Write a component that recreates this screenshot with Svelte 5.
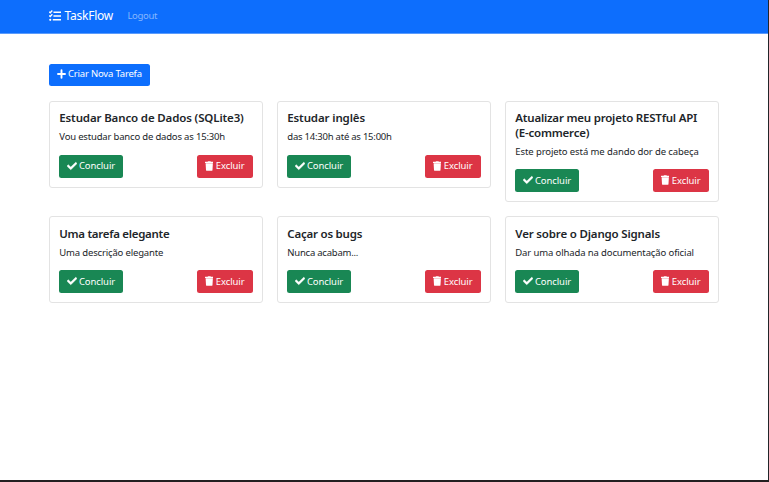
<script>
  const tasks = [
    { title: ['Estudar Banco de Dados (SQLite3)'], text: 'Vou estudar banco de dados as 15:30h', ts: -0.14, ds: -0.18 },
    { title: ['Estudar inglês'], text: 'das 14:30h até as 15:00h', ts: -0.13, ds: -0.23 },
    { title: ['Atualizar meu projeto RESTful API', '(E-commerce)'], text: 'Este projeto está me dando dor de cabeça', ts: -0.21, ds: -0.1 },
    { title: ['Uma tarefa elegante'], text: 'Uma descrição elegante', ts: -0.29, ds: -0.16 },
    { title: ['Caçar os bugs'], text: 'Nunca acabam...', ts: -0.22, ds: -0.23 },
    { title: ['Ver sobre o Django Signals'], text: 'Dar uma olhada na documentação oficial', ts: -0.17, ds: -0.12 }
  ];
</script>

<div class="page">
  <nav>
    <a class="brand" href="#home">
      <svg width="12" height="12" viewBox="0 0 512 512" fill="none" stroke="currentColor" stroke-width="66">
        <path d="M12 78l42 42 88-98M12 236l42 42 88-98" stroke-width="56" />
        <path d="M190 92h322M190 256h322M160 420h352" />
        <circle cx="54" cy="420" r="46" fill="currentColor" stroke="none" />
      </svg>
      <span>TaskFlow</span>
    </a>
    <a class="logout" href="#logout">Logout</a>
  </nav>
  <main>
    <button class="btn new">
      <svg width="9" height="10" viewBox="0 0 9 10" stroke="currentColor" stroke-width="1.9" stroke-linecap="round"><path d="M4.500 1.200v7.600M1 5h7" /></svg>
      <span>Criar Nova Tarefa</span>
    </button>
    <div class="grid">
      {#each tasks as t}
        <article>
          <h5 style:letter-spacing="{t.ts}px">{#each t.title as line}<span>{line}</span>{/each}</h5>
          <p style:letter-spacing="{t.ds}px"><span>{t.text}</span></p>
          <div class="actions">
            <button class="btn done">
              <svg width="10" height="10" viewBox="0 0 512 512" fill="currentColor" stroke="currentColor" stroke-width="18"><path d="M173.900 439.400l-166.400-166.400c-10-10-10-26.200 0-36.200l36.200-36.200c10-10 26.200-10 36.200 0L192 312.700 432.100 72.600c10-10 26.200-10 36.200 0l36.200 36.200c10 10 10 26.200 0 36.200L210.100 439.400c-10 10-26.200 10-36.200 0z" /></svg>
              <span>Concluir</span>
            </button>
            <button class="btn del">
              <svg width="8.500" height="10" viewBox="0 0 448 512" fill="currentColor"><path d="M432 32H312l-9.400-18.700A24 24 0 0 0 281.100 0H166.800a23.700 23.700 0 0 0-21.400 13.300L136 32H16A16 16 0 0 0 0 48v32a16 16 0 0 0 16 16h416a16 16 0 0 0 16-16V48a16 16 0 0 0-16-16zM32 112l21.200 355a48 48 0 0 0 47.900 45h245.800a48 48 0 0 0 47.900-45L416 112z" /></svg>
              <span>Excluir</span>
            </button>
          </div>
        </article>
      {/each}
    </div>
  </main>
</div>

<style>
  .page {
    box-sizing: border-box;
    width: 769px;
    height: 482px;
    background: #fff;
    border-right: 1px solid #212529;
    border-bottom: 2px solid #231f20;
    font-family: 'Noto Sans', sans-serif;
    color: #212529;
    overflow: hidden;
  }
  nav {
    box-sizing: border-box;
    height: 34px;
    padding: 0 49px 2px;
    background: #0d6efd;
    border-bottom: 1px solid #5a9bfc;
    display: flex;
    align-items: center;
  }
  a { text-decoration: none; white-space: nowrap; }
  .brand {
    display: flex;
    align-items: center;
    gap: 3.5px;
    width: 78.500px;
    color: #fff;
    font-size: 12px;
    letter-spacing: -0.24px;
  }
  .logout { color: #86b7fe; font-size: 9.5px; letter-spacing: -0.36px; }
  main { padding: 29.700px 49px 0; }
  svg { flex: none; }
  .btn {
    box-sizing: border-box;
    display: flex;
    align-items: center;
    height: 22.700px;
    padding: 0 0 1px 8px;
    gap: 2px;
    border: 0;
    border-radius: 2.5px;
    color: #fff;
    font: 9.5px 'Noto Sans', sans-serif;
    letter-spacing: -0.08px;
    white-space: nowrap;
  }
  .new { width: 101px; background: #0d6efd; letter-spacing: -0.19px; padding-bottom: 2.5px; }
  .done { width: 64px; background: #198754; gap: 1.6px; }
  .del { width: 56px; background: #dc3545; gap: 2.5px; }
  .grid {
    margin-top: 14.600px;
    display: grid;
    grid-template-columns: repeat(3, 214px);
    gap: 14.1px 14px;
    align-items: start;
  }
  article {
    box-sizing: border-box;
    padding: 9.300px 9.300px 9px;
    border: 1px solid #e3e3e3;
    border-radius: 3px;
  }
  h5 {
    margin: 0;
    font-size: 11.5px;
    line-height: 14.5px;
    font-weight: 600;
    white-space: nowrap;
  }
  h5 span { display: block; }
  p {
    margin: 3.700px 0 10.500px;
    font-size: 9.5px;
    line-height: 15px;
    white-space: nowrap;
  }
  .actions { display: flex; justify-content: space-between; }
</style>
